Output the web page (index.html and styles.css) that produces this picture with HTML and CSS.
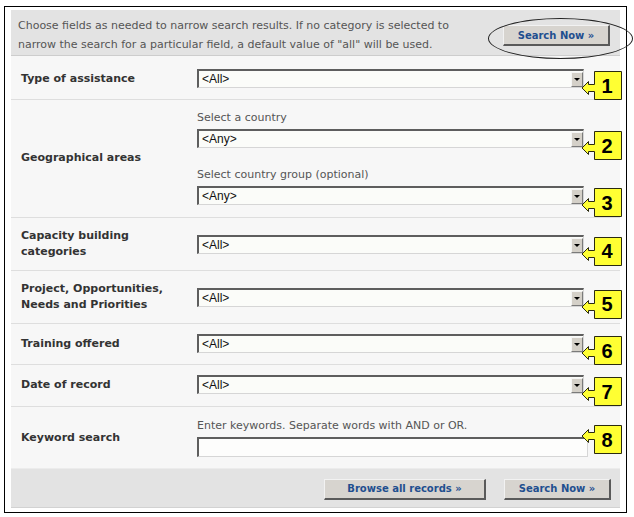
FILE: index.html
```html
<!DOCTYPE html>
<html lang="en">
<head>
<meta charset="utf-8">
<title>Search</title>
<link rel="stylesheet" href="styles.css">
</head>
<body>
<div class="frame">
  <form class="panel">
    <div class="intro">
      <p class="intro-text">Choose fields as needed to narrow search results. If no category is selected to<br>narrow the search for a particular field, a default value of "all" will be used.</p>
      <div class="intro-action">
        <button type="button" class="btn btn-search">Search Now »</button>
        <span class="ring"></span>
      </div>
    </div>

    <div class="row row-first">
      <div class="label">Type of assistance</div>
      <div class="fields">
        <div class="field">
          <div class="select"><span class="value">&lt;All&gt;</span><span class="drop"></span></div>
          <div class="callout"><svg width="42" height="29" viewBox="0 0 42 29"><path d="M13.5 0.5H40.5V28.5H13.5V20.5H7.5V23.5L1 17L7.5 10.5V13.5H13.5Z"/></svg><span class="num">1</span></div>
        </div>
      </div>
    </div>

    <div class="row row-geo">
      <div class="label">Geographical areas</div>
      <div class="fields">
        <div class="hint">Select a country</div>
        <div class="field">
          <div class="select"><span class="value">&lt;Any&gt;</span><span class="drop"></span></div>
          <div class="callout"><svg width="42" height="29" viewBox="0 0 42 29"><path d="M13.5 0.5H40.5V28.5H13.5V20.5H7.5V23.5L1 17L7.5 10.5V13.5H13.5Z"/></svg><span class="num">2</span></div>
        </div>
        <div class="hint hint-second">Select country group (optional)</div>
        <div class="field">
          <div class="select"><span class="value">&lt;Any&gt;</span><span class="drop"></span></div>
          <div class="callout"><svg width="42" height="29" viewBox="0 0 42 29"><path d="M13.5 0.5H40.5V28.5H13.5V20.5H7.5V23.5L1 17L7.5 10.5V13.5H13.5Z"/></svg><span class="num">3</span></div>
        </div>
      </div>
    </div>

    <div class="row row-tall">
      <div class="label">Capacity building<br>categories</div>
      <div class="fields">
        <div class="field">
          <div class="select"><span class="value">&lt;All&gt;</span><span class="drop"></span></div>
          <div class="callout"><svg width="42" height="29" viewBox="0 0 42 29"><path d="M13.5 0.5H40.5V28.5H13.5V20.5H7.5V23.5L1 17L7.5 10.5V13.5H13.5Z"/></svg><span class="num">4</span></div>
        </div>
      </div>
    </div>

    <div class="row row-tall">
      <div class="label">Project, Opportunities,<br>Needs and Priorities</div>
      <div class="fields">
        <div class="field">
          <div class="select"><span class="value">&lt;All&gt;</span><span class="drop"></span></div>
          <div class="callout"><svg width="42" height="29" viewBox="0 0 42 29"><path d="M13.5 0.5H40.5V28.5H13.5V20.5H7.5V23.5L1 17L7.5 10.5V13.5H13.5Z"/></svg><span class="num">5</span></div>
        </div>
      </div>
    </div>

    <div class="row">
      <div class="label">Training offered</div>
      <div class="fields">
        <div class="field">
          <div class="select"><span class="value">&lt;All&gt;</span><span class="drop"></span></div>
          <div class="callout"><svg width="42" height="29" viewBox="0 0 42 29"><path d="M13.5 0.5H40.5V28.5H13.5V20.5H7.5V23.5L1 17L7.5 10.5V13.5H13.5Z"/></svg><span class="num">6</span></div>
        </div>
      </div>
    </div>

    <div class="row row-date">
      <div class="label">Date of record</div>
      <div class="fields">
        <div class="field">
          <div class="select"><span class="value">&lt;All&gt;</span><span class="drop"></span></div>
          <div class="callout"><svg width="42" height="29" viewBox="0 0 42 29"><path d="M13.5 0.5H40.5V28.5H13.5V20.5H7.5V23.5L1 17L7.5 10.5V13.5H13.5Z"/></svg><span class="num">7</span></div>
        </div>
      </div>
    </div>

    <div class="row row-keyword">
      <div class="label">Keyword search</div>
      <div class="fields">
        <div class="hint">Enter keywords. Separate words with AND or OR.</div>
        <div class="field">
          <div class="input"></div>
          <div class="callout callout-high"><svg width="42" height="29" viewBox="0 0 42 29"><path d="M13.5 0.5H40.5V28.5H13.5V14.5H7.5V17.5L1 11L7.5 4.5V7.5H13.5Z"/></svg><span class="num">8</span></div>
        </div>
      </div>
    </div>

    <div class="actions">
      <button type="button" class="btn btn-browse">Browse all records »</button>
      <button type="button" class="btn btn-search">Search Now »</button>
    </div>
  </form>
</div>
</body>
</html>
```

FILE: styles.css
```css
* {
  box-sizing: border-box;
}

body {
  margin: 0;
  background: #ffffff;
  font-family: "DejaVu Sans", Verdana, sans-serif;
  font-size: 11px;
  color: #333333;
}

.frame {
  margin: 6px 0 0 4px;
  width: 623px;
  height: 507px;
  border: 1px solid #000000;
  padding: 3px 6px 4px 6px;
}

.panel {
  height: 100%;
  margin: 0;
  background: #f7f7f7;
  display: flex;
  flex-direction: column;
}

/* intro strip */
.intro {
  display: flex;
  justify-content: space-between;
  align-items: flex-start;
  height: 46px;
  padding: 6px 10px 0 7px;
  background: #e3e3e3;
  border-bottom: 1px solid #cdcdcd;
}

.intro-text {
  margin: 0;
  line-height: 19px;
  color: #555555;
}

.intro-action {
  position: relative;
  margin-top: 9px;
}

.ring {
  position: absolute;
  left: -15px;
  top: -7px;
  width: 145px;
  height: 41px;
  border: 1px solid #222222;
  border-radius: 50%;
  pointer-events: none;
}

/* buttons */
.btn {
  display: flex;
  align-items: center;
  justify-content: center;
  height: 21px;
  padding: 0;
  margin: 0;
  background: #d7d4cf;
  border-style: solid;
  border-width: 1px 2px 2px 1px;
  border-color: #f2f2f2 #5a5a5a #5a5a5a #f2f2f2;
  font-family: "DejaVu Sans", Verdana, sans-serif;
  font-size: 10px;
  font-weight: bold;
  color: #1f4f8f;
}

.btn-search {
  width: 107px;
}

.btn-browse {
  width: 162px;
}

/* rows */
.row {
  display: flex;
  align-items: center;
  padding: 10px 0 11px;
  border-bottom: 1px solid #dedede;
}

.row-first {
  padding: 13px 0 11px;
}

.row-geo {
  padding: 11px 0 12px;
}

.row-tall {
  padding: 10px 0 10px;
}

.row-date {
  padding: 10px 0 12px;
}

.row-keyword {
  padding: 12px 0 11px;
  border-bottom: none;
}

.label {
  width: 186px;
  padding-left: 10px;
  font-weight: bold;
  line-height: 16px;
  color: #333333;
}

.fields {
  width: 387px;
}

.hint {
  line-height: 14px;
  margin-bottom: 4px;
  color: #555555;
}

.hint-second {
  margin-top: 20px;
}

.field {
  position: relative;
}

.select {
  display: flex;
  align-items: center;
  height: 19px;
  background: #fbfcf9;
  border-style: solid;
  border-width: 2px 1px 1px 2px;
  border-color: #5e5e5e #d6d6d6 #d6d6d6 #5e5e5e;
}

.value {
  flex: 1;
  padding-left: 3px;
  font-family: "Liberation Sans", Arial, sans-serif;
  font-size: 12px;
  color: #111111;
}

.drop {
  display: flex;
  align-items: center;
  justify-content: center;
  width: 12px;
  height: 15px;
  margin-top: 1px;
  background: #d4d0c8;
  border-style: solid;
  border-width: 1px;
  border-color: #f5f5f5 #7a7a7a #7a7a7a #f5f5f5;
}

.drop::before {
  content: "";
  border-left: 3px solid transparent;
  border-right: 3px solid transparent;
  border-top: 3px solid #000000;
}

.input {
  width: 391px;
  height: 20px;
  background: #fdfdfc;
  border-style: solid;
  border-width: 2px 1px 1px 2px;
  border-color: #5e5e5e #d6d6d6 #d6d6d6 #5e5e5e;
}

/* numbered callouts */
.callout {
  position: absolute;
  left: 384px;
  top: 2px;
  width: 42px;
  height: 29px;
}

.callout-high {
  top: -12px;
}

.callout svg {
  display: block;
}

.callout path {
  fill: #ffff33;
  stroke: #2a2a10;
  stroke-width: 1;
}

.num {
  position: absolute;
  left: 13px;
  top: 1px;
  width: 26px;
  height: 28px;
  display: flex;
  align-items: center;
  justify-content: center;
  font-family: "Liberation Sans", Arial, sans-serif;
  font-size: 20px;
  font-weight: bold;
  color: #000000;
}

/* bottom actions */
.actions {
  flex: 1;
  display: flex;
  justify-content: flex-end;
  align-items: center;
  gap: 18px;
  padding: 2px 9px 0 0;
  background: #e3e3e3;
  border-top: 1px solid #ececec;
  border-bottom: 1px solid #d2d2d2;
}
```
